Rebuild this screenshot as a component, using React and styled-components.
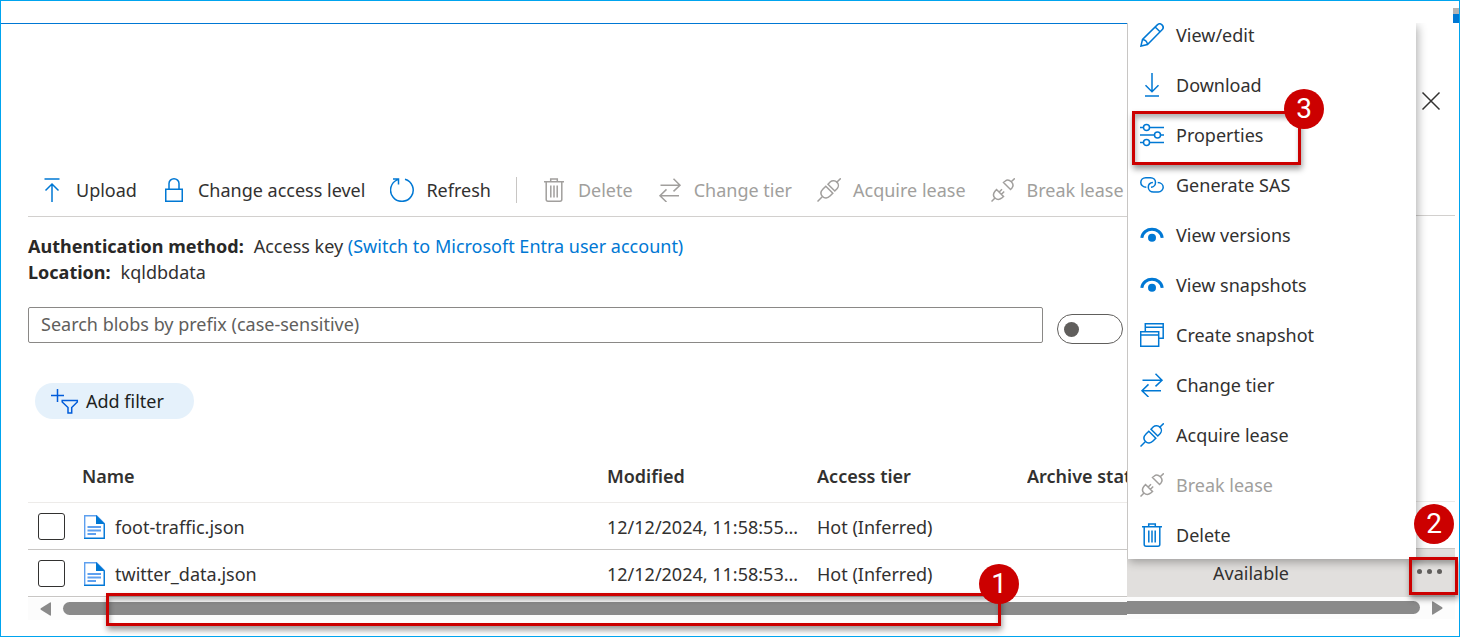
import React from "react";
import styled, { createGlobalStyle, css } from "styled-components";

const GlobalStyle = createGlobalStyle`
  *, *::before, *::after { box-sizing: border-box; }
  body {
    margin: 0;
    background: #fff;
    color: #323130;
    font: 18px/26px "Noto Sans", "Open Sans", sans-serif;
  }
  button, input { font: inherit; color: inherit; }
`;

const Page = styled.div`
  min-height: 100vh;
  border: 1px solid #00a4ef;
  display: flex;
  flex-direction: column;
  overflow: hidden;
`;

const TopStrip = styled.header`
  height: 22px;
  display: flex;
  justify-content: flex-end;
  align-items: flex-end;
`;

const Avatar = styled.span`
  width: 6px;
  height: 15px;
  border-top: 6px solid #b3b3b3;
  background: #0078d4;
`;

const Columns = styled.div`
  flex: 1;
  display: grid;
  grid-template-columns: minmax(0, 1fr) 332px;
`;

const Main = styled.main`
  min-width: 0;
  border-top: 1px solid #0078d4;
  padding: 140px 0 0 27px;
  overflow: hidden;
`;

const Toolbar = styled.div`
  height: 53px;
  display: flex;
  align-items: center;
  gap: 25px;
  padding-left: 12px;
  border-bottom: 1px solid #d2d0ce;
`;

const Divider = styled.span`
  width: 1px;
  height: 26px;
  flex: none;
  background: #c8c6c4;
`;

const actionStyle = css`
  display: flex;
  align-items: center;
  gap: 12px;
  padding: 0;
  border: 0;
  background: none;
  white-space: nowrap;
  flex: none;
  color: #323130;
  cursor: pointer;
  & > svg { color: #0078d4; }
  &:disabled, &:disabled > svg { color: #a19f9d; cursor: default; }
`;

const ToolButton = styled.button`
  ${actionStyle}
`;

const Glyph = styled.svg`
  width: 24px;
  height: 24px;
  flex: none;
  display: block;
  fill: none;
  stroke: currentColor;
  stroke-width: 1.5;
`;

const Facts = styled.dl`
  margin: 16px 0 0;
`;

const Fact = styled.div`
  display: flex;
  gap: 10px;
  white-space: nowrap;
`;

const FactName = styled.dt`
  font-weight: 700;
  color: #292827;
`;

const FactValue = styled.dd`
  margin: 0;
`;

const Link = styled.a`
  color: #0078d4;
  text-decoration: none;
`;

const SearchRow = styled.div`
  margin-top: 22px;
  display: flex;
  align-items: flex-start;
  gap: 14px;
  padding-right: 4px;
`;

const SearchInput = styled.input`
  flex: 1;
  min-width: 0;
  height: 36px;
  padding: 0 12px 2px;
  border: 1px solid #8a8886;
  border-radius: 2px;
  background: #fff;
  &::placeholder { color: #605e5c; opacity: 1; }
`;

const Toggle = styled.input`
  appearance: none;
  width: 66px;
  height: 30px;
  margin: 7px 0 0;
  padding: 0 6px;
  border: 1px solid #605e5c;
  border-radius: 15px;
  display: flex;
  align-items: center;
  &::before {
    content: "";
    width: 15px;
    height: 15px;
    border-radius: 50%;
    background: #605e5c;
  }
`;

const FilterButton = styled.button`
  height: 36px;
  margin: 39px 0 0 7px;
  padding: 0 30px 0 16px;
  display: flex;
  align-items: center;
  gap: 7px;
  border: 0;
  border-radius: 18px;
  background: #e5f1fb;
  color: #201f1e;
`;

const FilterGlyph = styled(Glyph)`
  width: 28px;
  height: 26px;
  color: #015cda;
`;

const Table = styled.table`
  width: 100%;
  border-collapse: collapse;
  table-layout: fixed;
`;

const BlobTable = styled(Table)`
  margin: 31px 0 1px;
`;

const HeadCell = styled.th`
  width: ${(p) => p.$width};
  height: 52px;
  padding: 0;
  text-align: left;
  font-weight: 600;
  white-space: nowrap;
  overflow: hidden;
  border-bottom: 1px solid #edebe9;
`;

const Cell = styled.td`
  height: 47px;
  padding: 2px 0 0;
  white-space: nowrap;
  border-bottom: 1px solid #c8c6c4;
`;

const Checkbox = styled.input`
  appearance: none;
  display: block;
  width: 27px;
  height: 27px;
  margin: 0 0 0 10px;
  border: 1px solid #323130;
  border-radius: 3px;
`;

const FileName = styled.label`
  display: flex;
  align-items: center;
  gap: 10px;
  padding-left: 2px;
`;

const FileGlyph = styled.svg`
  width: 21px;
  height: 24px;
  display: block;
`;

const ScrollBar = styled.div`
  position: relative;
  display: flex;
  align-items: center;
  height: 22px;
  padding: 0 ${(p) => (p.$end ? "12px" : "0")} 0 ${(p) => (p.$end ? "0" : "12px")};
  gap: 12px;
  background: #fcfcfc;
`;

const ScrollThumb = styled.span`
  flex: 1;
  height: 13px;
  background: #8a8a8a;
  border-radius: ${(p) => (p.$end ? "0 7px 7px 0" : "7px 0 0 7px")};
`;

const ScrollArrow = styled.button`
  padding: 0;
  border: 0;
  background: none;
  color: #8a8a8a;
  & > svg { display: block; width: 11px; height: 14px; fill: currentColor; }
`;

const Side = styled.aside`
  position: relative;
  padding-right: 4px;
`;

const SideHeader = styled.div`
  height: 193px;
  display: flex;
  justify-content: flex-end;
  align-items: flex-start;
  padding: 66px 12px 0;
  border-bottom: 1px solid #d2d0ce;
`;

const CloseButton = styled.button`
  padding: 0;
  border: 0;
  background: none;
  color: #323130;
`;

const LeaseTable = styled(Table)`
  margin-top: 285px;
`;

const LeaseCell = styled.td`
  height: ${(p) => (p.$active ? "48px" : "47px")};
  padding: 0 0 0 ${(p) => (p.$active ? "86px" : "0")};
  border-top: 1px solid ${(p) => (p.$active ? "#c8c6c4" : "#edebe9")};
  background: ${(p) => (p.$active ? "#e1dfdd" : "transparent")};
`;

const MoreCell = styled(LeaseCell)`
  width: 46px;
  padding: 0;
`;

const MoreButton = styled.button`
  display: flex;
  gap: 5px;
  width: 46px;
  height: 26px;
  padding: 9px 0 0 8px;
  border: 0;
  background: none;
`;

const Dot = styled.span`
  width: 5px;
  height: 5px;
  border-radius: 50%;
  background: #605e5c;
`;

const Menu = styled.ul`
  position: absolute;
  top: 0;
  left: 0;
  width: 289px;
  margin: 0;
  padding: 0 0 12px 12px;
  list-style: none;
  display: flex;
  flex-direction: column;
  gap: 26px;
  background: #fff;
  border-left: 1px solid #c8c6c4;
  box-shadow: 2px 3px 9px rgba(0, 0, 0, 0.3);
  clip-path: inset(0 -16px -16px 0);
`;

const MenuItem = styled.li`
  height: 24px;
`;

const MenuButton = styled.button`
  ${actionStyle}
  height: 24px;
`;

const Callout = styled.div`
  position: absolute;
  border: 3px solid #c00;
  box-shadow: 1px 4px 6px rgba(0, 0, 0, 0.4), inset 1px 4px 5px rgba(0, 0, 0, 0.3);
  pointer-events: none;
`;

const ScrollCallout = styled(Callout)`
  inset: -5px 126px -6px 78px;
`;

const PropertiesCallout = styled(Callout)`
  top: 88px;
  left: 5px;
  width: 169px;
  height: 54px;
`;

const MoreCallout = styled(Callout)`
  top: 534px;
  right: 1px;
  width: 49px;
  height: 38px;
`;

const Badge = styled.span`
  position: absolute;
  top: ${(p) => p.$top};
  right: ${(p) => p.$right};
  width: 40px;
  height: 40px;
  border-radius: 50%;
  background: #c00;
  color: #fff;
  text-align: center;
  font: 28px/40px Roboto, "Liberation Sans", sans-serif;
`;

const shapes = {
  upload: <path d="M4.500 1H19.500M12 24V6M5.500 12.500L12 6L18.500 12.500" />,
  lock: <path d="M3.750 11.250H20.250V23.250H3.750ZM7 11V5.500A5 4.750 0 0 1 17 5.500V11" />,
  refresh: <path d="M15 1.200A11.300 11.300 0 1 1 7.600 1.600M3 1H8.500V6.500" />,
  trash: (
    <>
      <path d="M2 3.700H22M4.200 4V21.500Q4.200 23.200 6 23.200H18Q19.800 23.200 19.800 21.500V4M8.700 3.500V1H15.300V3.500" />
      <path d="M8.800 7.500V19.500M12 7.500V19.500M15.200 7.500V19.500" />
    </>
  ),
  swap: <path d="M2.500 7.200H22M15.500 .8L22 7.200L15.500 13.400M21 17.800H2M8.500 11.400L2 17.800L8.500 24" />,
  plug: (
    <path d="M.5 23.500L5 19M19.200 4.800L23.800 .3M8.800 8.200L15.800 15.200L13 18C10.500 20.500 7.600 20.600 5.500 18.500S3.500 13.500 6 11ZM11 6.200L17.800 13L20.200 10.600C22 8.500 21.500 5.600 19.900 4.100S15.300 2 13.400 3.800Z" />
  ),
  unplug: (
    <path d="M.5 23.500L4 20M20 4L23.800 .3M5.500 11.500L12.500 18.500L10.500 20.200C8.500 21.800 5.800 21.600 4 20S2.200 15.700 3.800 13.500ZM8.200 14L11 11.200M10.500 16.200L13.200 13.500M12.500 4.500L19.500 11.500L21 9.900C22.500 8 22 5.500 20.300 3.800S16 1.500 14.300 3Z" />
  ),
  pencil: (
    <path d="M.9 23.100L2.500 16.500L17.300 1.900C18.600 .6 20.600 .5 22 1.900S23.400 5.400 22.100 6.700L7.500 21.500ZM2.500 16.500Q6.900 17 7.500 21.500M15.200 4L20 8.800" />
  ),
  download: <path d="M12 0V18.500M5.500 12.200L12 18.700L18.500 12.200M5 23H19" />,
  sliders: (
    <>
      <path d="M0 4.500H3.500M9.500 4.500H24M0 12H14.500M20.500 12H24M0 19.500H3.500M9.500 19.500H24" />
      <circle cx="6.500" cy="4.500" r="3" />
      <circle cx="17.500" cy="12" r="3" />
      <circle cx="6.500" cy="19.500" r="3" />
    </>
  ),
  link: (
    <path d="M6.300 14.200C3 14.200 .8 12.100 .8 9.400S3 4.700 5.700 4.700H10.500C13.500 4.700 15.500 6.800 15.500 9.400S13.500 14.100 11 14.300M17.700 9.600C21 9.600 23.200 11.700 23.200 14.200S21 19 18.300 19H13.500C10.500 19 8.300 16.900 8.300 14.300S10.300 9.800 12.900 9.600" />
  ),
  eye: (
    <>
      <path d="M1.800 14.800C3 3.500 21 3.500 22.200 14.800" strokeWidth="3" />
      <circle cx="12" cy="14.700" r="4" fill="currentColor" stroke="none" />
    </>
  ),
  windows: (
    <path d="M.7 8.700H18.700V23.200H.7ZM.7 12H18.700M5.300 8.500V.8H23.200V15.300H19M5.300 4.300H23" />
  ),
  close: <path d="M3.500 3.500L20.500 20.500M20.500 3.500L3.500 20.500" />,
};

function Icon({ name }) {
  return (
    <Glyph viewBox="0 0 24 24" aria-hidden="true">
      {shapes[name]}
    </Glyph>
  );
}

function FileIcon() {
  return (
    <FileGlyph viewBox="0 0 21 24" aria-hidden="true">
      <path d="M.7 .7H12.500L20.300 8.500V23.300H.7Z" fill="#fff" stroke="#5ea0ef" strokeWidth="1.400" />
      <path d="M12 0L21 9H12Z" fill="#0078d4" />
      <path d="M3.500 12H17M3.500 15.500H17M3.500 19H12" stroke="#5ea0ef" strokeWidth="1.800" />
      <path d="M0 23.300H20.300V9" fill="none" stroke="#0078d4" strokeWidth="1.200" />
    </FileGlyph>
  );
}

const commands = [
  { icon: "upload", label: "Upload" },
  { icon: "lock", label: "Change access level" },
  { icon: "refresh", label: "Refresh" },
];

const blobCommands = [
  { icon: "trash", label: "Delete" },
  { icon: "swap", label: "Change tier" },
  { icon: "plug", label: "Acquire lease" },
  { icon: "unplug", label: "Break lease" },
];

const menuItems = [
  { icon: "pencil", label: "View/edit" },
  { icon: "download", label: "Download" },
  { icon: "sliders", label: "Properties" },
  { icon: "link", label: "Generate SAS" },
  { icon: "eye", label: "View versions" },
  { icon: "eye", label: "View snapshots" },
  { icon: "windows", label: "Create snapshot" },
  { icon: "swap", label: "Change tier" },
  { icon: "plug", label: "Acquire lease" },
  { icon: "unplug", label: "Break lease", disabled: true },
  { icon: "trash", label: "Delete" },
];

const blobs = [
  { name: "foot-traffic.json", modified: "12/12/2024, 11:58:55...", tier: "Hot (Inferred)" },
  { name: "twitter_data.json", modified: "12/12/2024, 11:58:53...", tier: "Hot (Inferred)" },
];

export default function App() {
  return (
    <>
      <GlobalStyle />
      <Page>
        <TopStrip>
          <Avatar />
        </TopStrip>
        <Columns>
          <Main>
            <Toolbar role="toolbar">
              {commands.map((c) => (
                <ToolButton key={c.label}>
                  <Icon name={c.icon} />
                  {c.label}
                </ToolButton>
              ))}
              <Divider />
              {blobCommands.map((c) => (
                <ToolButton key={c.label} disabled>
                  <Icon name={c.icon} />
                  {c.label}
                </ToolButton>
              ))}
            </Toolbar>
            <Facts>
              <Fact>
                <FactName>Authentication method:</FactName>
                <FactValue>
                  Access key <Link href="#entra">(Switch to Microsoft Entra user account)</Link>
                </FactValue>
              </Fact>
              <Fact>
                <FactName>Location:</FactName>
                <FactValue>kqldbdata</FactValue>
              </Fact>
            </Facts>
            <SearchRow>
              <SearchInput
                type="text"
                aria-label="Search blobs by prefix"
                placeholder="Search blobs by prefix (case-sensitive)"
              />
              <Toggle type="checkbox" role="switch" aria-label="Show deleted blobs" />
            </SearchRow>
            <FilterButton>
              <FilterGlyph viewBox="0 0 28 26" aria-hidden="true">
                <path d="M0 7.500H13M6.500 1V14M11.200 12.500H26.300V14L20.700 19.500V25H17V19.500L11.200 14Z" />
              </FilterGlyph>
              Add filter
            </FilterButton>
            <BlobTable>
              <thead>
                <tr>
                  <HeadCell $width="54px" />
                  <HeadCell>Name</HeadCell>
                  <HeadCell $width="210px">Modified</HeadCell>
                  <HeadCell $width="210px">Access tier</HeadCell>
                  <HeadCell $width="100px">Archive status</HeadCell>
                </tr>
              </thead>
              <tbody>
                {blobs.map((b) => (
                  <tr key={b.name}>
                    <Cell>
                      <Checkbox type="checkbox" id={b.name} />
                    </Cell>
                    <Cell>
                      <FileName htmlFor={b.name}>
                        <FileIcon />
                        {b.name}
                      </FileName>
                    </Cell>
                    <Cell>{b.modified}</Cell>
                    <Cell>{b.tier}</Cell>
                    <Cell />
                  </tr>
                ))}
              </tbody>
            </BlobTable>
            <ScrollBar>
              <ScrollArrow aria-label="Scroll left">
                <svg viewBox="0 0 11 14">
                  <path d="M11 1V13Q11 14 10 13.500L.8 7.800Q0 7 .8 6.200L10 .5Q11 0 11 1Z" />
                </svg>
              </ScrollArrow>
              <ScrollThumb />
              <ScrollCallout>
                <Badge $top="-32px" $right="-21px">1</Badge>
              </ScrollCallout>
            </ScrollBar>
          </Main>
          <Side>
            <SideHeader>
              <CloseButton aria-label="Close">
                <Icon name="close" />
              </CloseButton>
            </SideHeader>
            <LeaseTable>
              <tbody>
                <tr>
                  <LeaseCell />
                  <MoreCell />
                </tr>
                <tr>
                  <LeaseCell $active>Available</LeaseCell>
                  <MoreCell $active>
                    <MoreButton aria-label="More actions">
                      <Dot />
                      <Dot />
                      <Dot />
                    </MoreButton>
                  </MoreCell>
                </tr>
              </tbody>
            </LeaseTable>
            <ScrollBar $end>
              <ScrollThumb $end />
              <ScrollArrow aria-label="Scroll right">
                <svg viewBox="0 0 11 14">
                  <path d="M0 1V13Q0 14 1 13.500L10.200 7.800Q11 7 10.200 6.200L1 .5Q0 0 0 1Z" />
                </svg>
              </ScrollArrow>
            </ScrollBar>
            <Menu>
              {menuItems.map((m) => (
                <MenuItem key={m.label}>
                  <MenuButton disabled={m.disabled}>
                    <Icon name={m.icon} />
                    {m.label}
                  </MenuButton>
                </MenuItem>
              ))}
            </Menu>
            <PropertiesCallout>
              <Badge $top="-25px" $right="-26px">3</Badge>
            </PropertiesCallout>
            <MoreCallout>
              <Badge $top="-56px" $right="1px">2</Badge>
            </MoreCallout>
          </Side>
        </Columns>
      </Page>
    </>
  );
}
